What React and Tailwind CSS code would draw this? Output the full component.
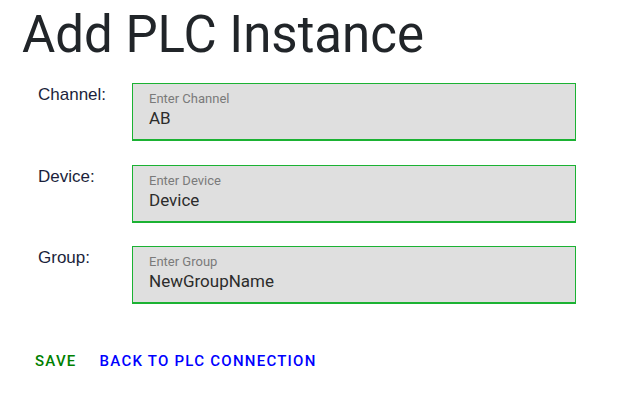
export default function App() {
  const rows = [
    { label: "Channel:", hint: "Enter Channel", value: "AB" },
    { label: "Device:", hint: "Enter Device", value: "Device" },
    { label: "Group:", hint: "Enter Group", value: "NewGroupName" },
  ];
  return (
    <div className="w-[638px] h-[394px] bg-white overflow-hidden">
      <h1 className="font-['Roboto',sans-serif] text-[51px] leading-none text-[#212529] pl-[22px] pt-[9px]">
        Add PLC Instance
      </h1>
      <div className="flex flex-col gap-[23.5px] mt-[23px]">
        {rows.map((r) => (
          <div key={r.label} className="flex">
            <div className="w-[132px] shrink-0 pl-[38px] pt-[2px] font-['Liberation_Sans',sans-serif] text-[17px] text-[#1b1f3b] leading-[20px]">
              {r.label}
            </div>
            <div className="w-[444px] h-[58px] bg-[#dfdfdf] border border-b-2 border-[#1bb233] pl-[16px] pt-[7px] font-['Roboto',sans-serif]">
              <div className="text-[13px] leading-[15px] text-[#7a7a7a]">{r.hint}</div>
              <div className="text-[17px] leading-[22px] text-[#2c2c2c] mt-[1px]">{r.value}</div>
            </div>
          </div>
        ))}
      </div>
      <div className="flex gap-[23px] pl-[35px] mt-[49px] font-['Roboto',sans-serif] font-medium text-[15px] tracking-[1.25px] leading-[16px]">
        <span className="text-[#008000]">SAVE</span>
        <span className="text-[#0000ff]">BACK TO PLC CONNECTION</span>
      </div>
    </div>
  );
}
